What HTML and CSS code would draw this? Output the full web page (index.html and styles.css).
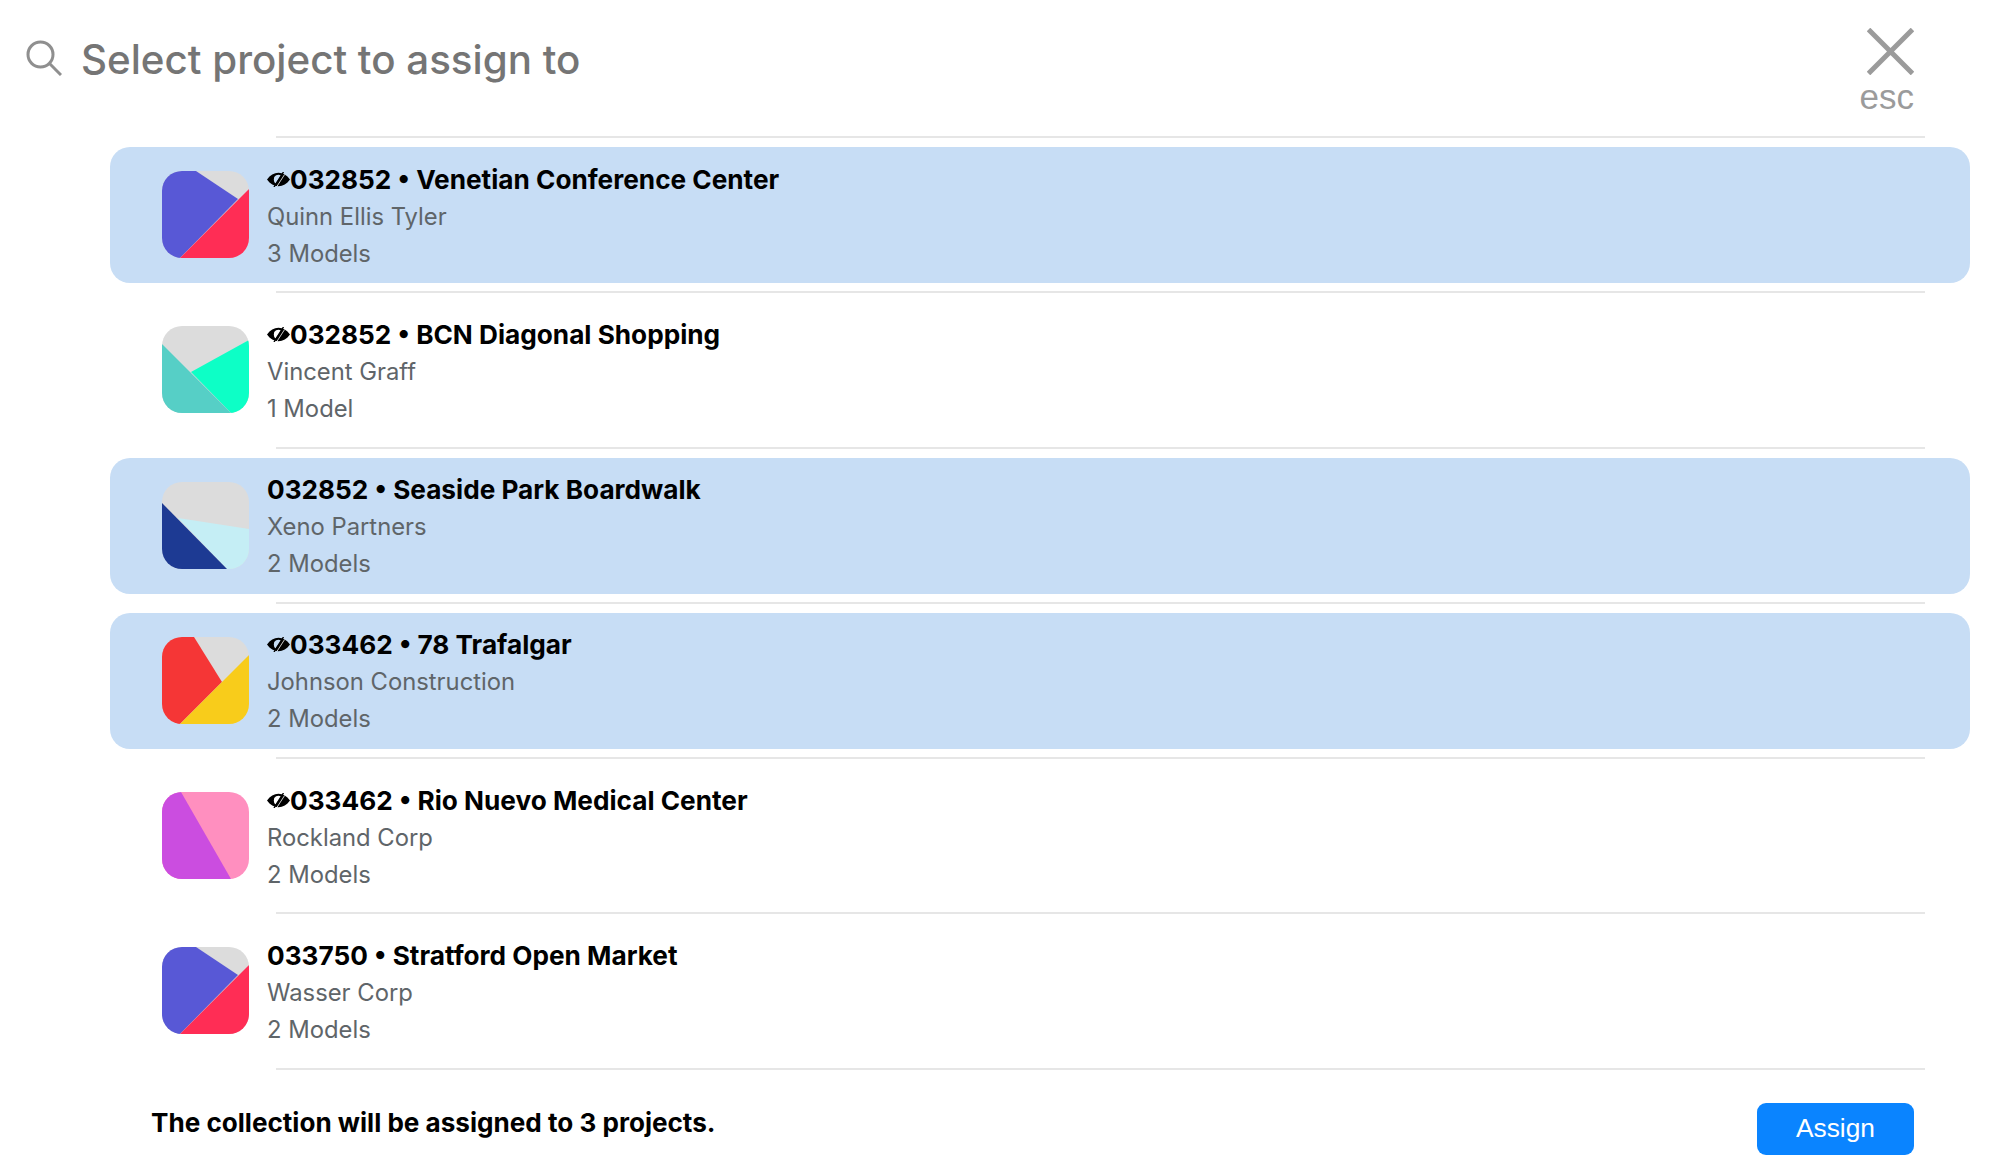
FILE: index.html
```html
<!DOCTYPE html>
<html lang="en">
<head>
<meta charset="utf-8">
<title>Select project</title>
<link rel="stylesheet" href="styles.css">
</head>
<body>
<svg class="defs" width="0" height="0" aria-hidden="true">
  <defs>
    <symbol id="eye" viewBox="0 0 23 15">
      <path fill-rule="evenodd" d="M0 7.500C3.200 3 7 .8 11.500 .8S19.800 3 23 7.500C19.800 12 16 14.200 11.500 14.200S3.200 12 0 7.500ZM6.800 7.800a4.600 4.600 0 0 0 1.700 3.600l5.600-7.800a4.600 4.600 0 0 0-7.300 4.200Z"/>
      <path d="M16.500 0 7 15" stroke="#000" stroke-width="1.400" fill="none"/>
      <path d="M17.600 2.500 10.200 14" stroke="#fff" stroke-opacity=".8" stroke-width="1" fill="none"/>
    </symbol>
    <symbol id="logo-violet" viewBox="0 0 87 87">
      <rect width="87" height="87" fill="#dcdcdc"/>
      <polygon points="0,0 34,0 76,28 18,87 0,87" fill="#5858d6"/>
      <polygon points="87,18 87,87 18,87" fill="#ff2d55"/>
    </symbol>
    <symbol id="logo-mint" viewBox="0 0 87 87">
      <rect width="87" height="87" fill="#dcdcdc"/>
      <polygon points="29,46 87,14 87,87 69,87" fill="#0dffc6"/>
      <polygon points="0,18 69,87 0,87" fill="#56cfc6"/>
    </symbol>
    <symbol id="logo-navy" viewBox="0 0 87 87">
      <rect width="87" height="87" fill="#dcdcdc"/>
      <polygon points="16,36 87,47 87,87 65,87" fill="#c5eef5"/>
      <polygon points="0,21 65,87 0,87" fill="#1d3a93"/>
    </symbol>
    <symbol id="logo-red" viewBox="0 0 87 87">
      <rect width="87" height="87" fill="#dcdcdc"/>
      <polygon points="0,0 32,0 60,45 18,87 0,87" fill="#f53636"/>
      <polygon points="87,18 87,87 18,87" fill="#f8cc1b"/>
    </symbol>
    <symbol id="logo-pink" viewBox="0 0 87 87">
      <rect width="87" height="87" fill="#ff8fbf"/>
      <polygon points="0,0 19,0 69,87 0,87" fill="#cb4de0"/>
    </symbol>
  </defs>
</svg>
<main class="panel">
  <header class="top">
    <div class="search">
      <svg class="search-icon" viewBox="0 0 36 36" aria-hidden="true"><circle cx="14.500" cy="14.500" r="12.500"/><path d="M23.500 23.500 35 35"/></svg>
      <span class="search-text">Select project to assign to</span>
    </div>
    <div class="close">
      <svg class="close-icon" viewBox="0 0 47 47" aria-hidden="true"><path d="M1.500 1.500 45.500 45.500M45.500 1.500 1.500 45.500"/></svg>
      <span class="close-label">esc</span>
    </div>
  </header>
  <div class="list">
    <div class="sep"></div>
    <div class="row selected">
      <svg class="logo"><use href="#logo-violet"/></svg>
      <div class="info"><div class="name"><svg class="eye"><use href="#eye"/></svg>032852 • Venetian Conference Center</div><div class="sub">Quinn Ellis Tyler</div><div class="sub">3 Models</div></div>
    </div>
    <div class="sep"></div>
    <div class="row">
      <svg class="logo"><use href="#logo-mint"/></svg>
      <div class="info"><div class="name"><svg class="eye"><use href="#eye"/></svg>032852 • BCN Diagonal Shopping</div><div class="sub">Vincent Graff</div><div class="sub">1 Model</div></div>
    </div>
    <div class="sep"></div>
    <div class="row selected">
      <svg class="logo"><use href="#logo-navy"/></svg>
      <div class="info"><div class="name">032852 • Seaside Park Boardwalk</div><div class="sub">Xeno Partners</div><div class="sub">2 Models</div></div>
    </div>
    <div class="sep"></div>
    <div class="row selected">
      <svg class="logo"><use href="#logo-red"/></svg>
      <div class="info"><div class="name"><svg class="eye"><use href="#eye"/></svg>033462 • 78 Trafalgar</div><div class="sub">Johnson Construction</div><div class="sub">2 Models</div></div>
    </div>
    <div class="sep"></div>
    <div class="row">
      <svg class="logo"><use href="#logo-pink"/></svg>
      <div class="info"><div class="name"><svg class="eye"><use href="#eye"/></svg>033462 • Rio Nuevo Medical Center</div><div class="sub">Rockland Corp</div><div class="sub">2 Models</div></div>
    </div>
    <div class="sep"></div>
    <div class="row">
      <svg class="logo"><use href="#logo-violet"/></svg>
      <div class="info"><div class="name">033750 • Stratford Open Market</div><div class="sub">Wasser Corp</div><div class="sub">2 Models</div></div>
    </div>
    <div class="sep"></div>
  </div>
  <footer class="bottom">
    <span class="summary">The collection will be assigned to 3 projects.</span>
    <button class="assign" type="button">Assign</button>
  </footer>
</main>
</body>
</html>
```
FILE: styles.css
```css
* { box-sizing: border-box; }
html, body { margin: 0; padding: 0; background: #fff; }
body { font-family: Inter, "Liberation Sans", sans-serif; color: #000; width: 2000px; height: 1176px; overflow: hidden; }
.defs { display: block; height: 0; }
.panel { display: flex; flex-direction: column; }
.top { height: 136px; display: flex; justify-content: space-between; align-items: flex-start; padding: 28px 86px 0 26px; }
.search { display: flex; align-items: center; gap: 19px; height: 64px; }
.search-icon { width: 36px; height: 36px; fill: none; stroke: #8f8f8f; stroke-width: 3; margin-top: -4px; }
.search-text { font-size: 40.3px; font-weight: 500; color: #757575; line-height: 64px; }
.close { display: flex; flex-direction: column; align-items: flex-end; }
.close-icon { width: 47px; height: 47px; fill: none; stroke: #9b9b9b; stroke-width: 5; display: block; }
.close-label { font-family: "Liberation Sans", sans-serif; font-size: 35px; line-height: 36px; color: #9b9b9b; margin: 4px 0 0 0; }
.list { display: flex; flex-direction: column; padding: 0 30px 0 110px; }
.sep { height: 2px; background: #e6e6e6; margin: 0 45px 0 166px; }
.row { height: 136px; margin: 9px 0 8.3px; padding: 0 52px; border-radius: 20px; display: flex; align-items: center; gap: 18px; }
.row.selected { background: #c7ddf5; }
.logo { width: 87px; height: 87px; border-radius: 20px; flex: none; display: block; margin-top: -1px; }
.info { display: flex; flex-direction: column; padding-top: 2px; }
.name { font-size: 26.2px; font-weight: 700; line-height: 37px; display: flex; align-items: center; }
.eye { width: 23px; height: 15px; flex: none; }
.sub { font-size: 23.8px; line-height: 37px; color: #5f6569; }
.bottom { display: flex; justify-content: space-between; align-items: center; padding: 33px 86px 0 151px; }
.summary { font-size: 26.1px; font-weight: 700; margin-top: -12px; }
.assign { width: 157px; height: 52px; border: 0; border-radius: 9px; background: #0a84ff; color: #fff; font-family: "Liberation Sans", sans-serif; font-size: 26.300px; }
```
